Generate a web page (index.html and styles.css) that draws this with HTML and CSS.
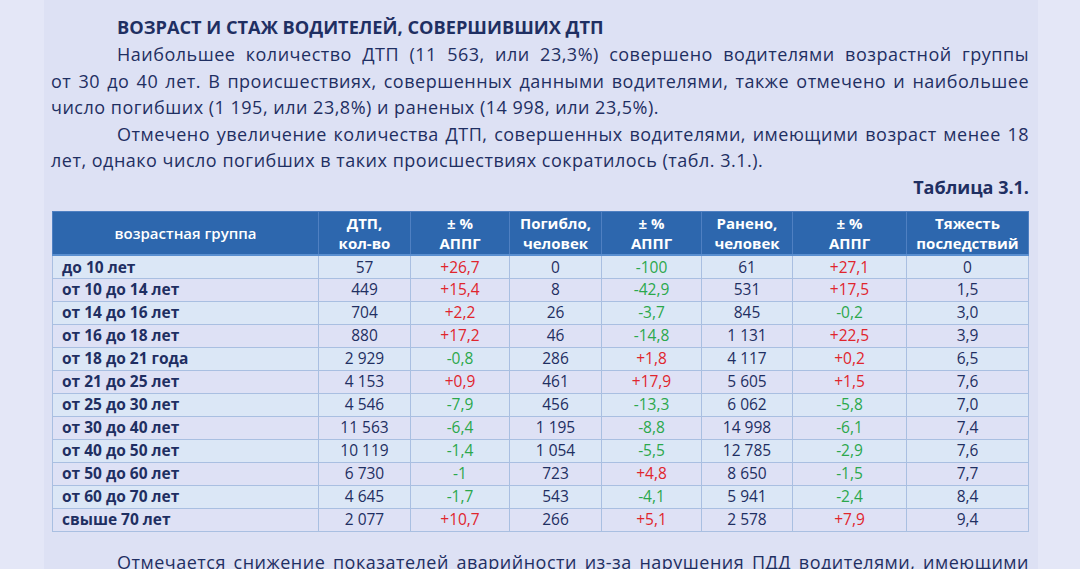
FILE: index.html
```html
<!DOCTYPE html>
<html lang="ru">
<head>
<meta charset="utf-8">
<title>Возраст и стаж водителей</title>
<link rel="stylesheet" href="styles.css">
</head>
<body>
<div class="screen">
  <div class="band"></div>
  <main class="page">
    <h1 class="title">ВОЗРАСТ И СТАЖ ВОДИТЕЛЕЙ, СОВЕРШИВШИХ ДТП</h1>
    <p class="para"><span class="ln first">Наибольшее количество ДТП (11&nbsp;563, или 23,3%) совершено водителями возрастной группы</span><span class="ln">от 30 до 40 лет. В происшествиях, совершенных данными водителями, также отмечено и наибольшее</span><span class="end">число погибших (1&nbsp;195, или 23,8%) и раненых (14&nbsp;998, или 23,5%).</span></p>
    <p class="para"><span class="ln first">Отмечено увеличение количества ДТП, совершенных водителями, имеющими возраст менее 18</span><span class="end">лет, однако число погибших в таких происшествиях сократилось (табл. 3.1.).</span></p>
    <div class="caption">Таблица 3.1.</div>
    <table class="data">
      <colgroup>
        <col class="c1"><col class="c2"><col class="c3"><col class="c4"><col class="c5"><col class="c6"><col class="c7"><col class="c8">
      </colgroup>
      <thead>
        <tr>
          <th>возрастная группа</th>
          <th>ДТП,<br>кол-во</th>
          <th>± %<br>АППГ</th>
          <th>Погибло,<br>человек</th>
          <th>± %<br>АППГ</th>
          <th>Ранено,<br>человек</th>
          <th>± %<br>АППГ</th>
          <th>Тяжесть<br>последствий</th>
        </tr>
      </thead>
      <tbody>
        <tr><td>до 10 лет</td><td>57</td><td class="up">+26,7</td><td>0</td><td class="dn">-100</td><td>61</td><td class="up">+27,1</td><td>0</td></tr>
        <tr><td>от 10 до 14 лет</td><td>449</td><td class="up">+15,4</td><td>8</td><td class="dn">-42,9</td><td>531</td><td class="up">+17,5</td><td>1,5</td></tr>
        <tr><td>от 14 до 16 лет</td><td>704</td><td class="up">+2,2</td><td>26</td><td class="dn">-3,7</td><td>845</td><td class="dn">-0,2</td><td>3,0</td></tr>
        <tr><td>от 16 до 18 лет</td><td>880</td><td class="up">+17,2</td><td>46</td><td class="dn">-14,8</td><td>1&nbsp;131</td><td class="up">+22,5</td><td>3,9</td></tr>
        <tr><td>от 18 до 21 года</td><td>2&nbsp;929</td><td class="dn">-0,8</td><td>286</td><td class="up">+1,8</td><td>4&nbsp;117</td><td class="up">+0,2</td><td>6,5</td></tr>
        <tr><td>от 21 до 25 лет</td><td>4&nbsp;153</td><td class="up">+0,9</td><td>461</td><td class="up">+17,9</td><td>5&nbsp;605</td><td class="up">+1,5</td><td>7,6</td></tr>
        <tr><td>от 25 до 30 лет</td><td>4&nbsp;546</td><td class="dn">-7,9</td><td>456</td><td class="dn">-13,3</td><td>6&nbsp;062</td><td class="dn">-5,8</td><td>7,0</td></tr>
        <tr><td>от 30 до 40 лет</td><td>11&nbsp;563</td><td class="dn">-6,4</td><td>1&nbsp;195</td><td class="dn">-8,8</td><td>14&nbsp;998</td><td class="dn">-6,1</td><td>7,4</td></tr>
        <tr><td>от 40 до 50 лет</td><td>10&nbsp;119</td><td class="dn">-1,4</td><td>1&nbsp;054</td><td class="dn">-5,5</td><td>12&nbsp;785</td><td class="dn">-2,9</td><td>7,6</td></tr>
        <tr><td>от 50 до 60 лет</td><td>6&nbsp;730</td><td class="dn">-1</td><td>723</td><td class="up">+4,8</td><td>8&nbsp;650</td><td class="dn">-1,5</td><td>7,7</td></tr>
        <tr><td>от 60 до 70 лет</td><td>4&nbsp;645</td><td class="dn">-1,7</td><td>543</td><td class="dn">-4,1</td><td>5&nbsp;941</td><td class="dn">-2,4</td><td>8,4</td></tr>
        <tr><td>свыше 70 лет</td><td>2&nbsp;077</td><td class="up">+10,7</td><td>266</td><td class="up">+5,1</td><td>2&nbsp;578</td><td class="up">+7,9</td><td>9,4</td></tr>
      </tbody>
    </table>
    <p class="para tail"><span class="ln first">Отмечается снижение показателей аварийности из-за нарушения ПДД водителями, имеющими</span></p>
  </main>
  <div class="band"></div>
</div>
</body>
</html>
```
FILE: styles.css
```css
html, body {
  margin: 0;
  padding: 0;
  height: 100%;
  overflow: hidden;
}
body {
  background: #e4e7f7;
  font-family: "Open Sans", "Noto Sans", sans-serif;
  color: #1f2f62;
}
.screen {
  display: flex;
  height: 569px;
}
.band {
  flex: 0 0 44px;
  background: #e4e7f7;
}
.band:last-child {
  flex: 1 1 auto;
}
.page {
  flex: 0 0 992px;
  background: #dde1f4;
  padding: 14px 9px 0 7px;
  box-sizing: border-box;
}
.title {
  margin: 0 0 1px 66px;
  font-size: 18.2px;
  font-weight: 700;
  line-height: 26px;
  letter-spacing: 0;
}
.para {
  margin: 0;
  font-size: 18px;
  line-height: 26.6px;
  letter-spacing: 0.5px;
}
.para .ln {
  display: block;
  text-align: justify;
  text-align-last: justify;
}
.para .ln.first {
  padding-left: 66px;
}
.para .end {
  display: block;
}
.para.tail {
  margin-top: 17px;
}
.caption {
  text-align: right;
  font-weight: 700;
  font-size: 18px;
  line-height: 26px;
  margin-bottom: 11px;
}
.data {
  border-collapse: collapse;
  margin-left: 1px;
  width: 976px;
  table-layout: fixed;
  font-size: 15.5px;
}
.c1 { width: 266px; }
.c2 { width: 92px; }
.c3 { width: 99px; }
.c4 { width: 92px; }
.c5 { width: 100px; }
.c6 { width: 91px; }
.c7 { width: 114px; }
.c8 { width: 122px; }
.data th {
  background: #2d67ae;
  color: #fff;
  font-weight: 700;
  font-size: 15px;
  line-height: 20px;
  height: 44px;
  padding: 0 2px;
  border: 1px solid #4f80c2;
  border-bottom: 2px solid #5a8fd0;
  box-sizing: border-box;
  text-align: center;
}
.data th:first-child {
  font-weight: 600;
}
.data td {
  height: 23px;
  padding: 0 4px;
  line-height: 21px;
  border: 1px solid #a9bfe1;
  text-align: center;
  box-sizing: border-box;
}
.data tbody tr:nth-child(odd) td { background: #dbe7f6; }
.data tbody tr:nth-child(even) td { background: #dee1f5; }
.data td:first-child {
  text-align: left;
  font-weight: 700;
  padding-left: 9px;
}
.data .up { color: #e0252d; }
.data .dn { color: #2ba84c; }
```
